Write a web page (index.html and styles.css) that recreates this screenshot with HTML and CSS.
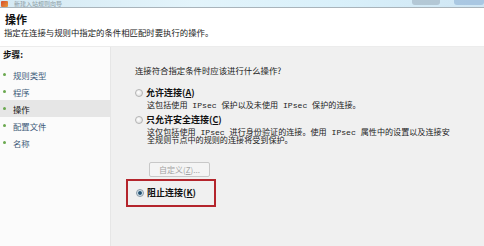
FILE: index.html
```html
<!DOCTYPE html>
<html lang="zh-CN">
<head>
<meta charset="utf-8">
<link rel="stylesheet" href="styles.css">
</head>
<body>
<div class="window">
  <div class="titlebar">
    <span class="app-icon"></span>
    <span class="title-text">新建入站规则向导</span>
    <span class="tb-spacer"></span>
    <span class="tb-btn"></span>
    <span class="tb-btn blue"></span>
  </div>
  <div class="header">
    <div class="h-title">操作</div>
    <div class="h-sub">指定在连接与规则中指定的条件相匹配时要执行的操作。</div>
  </div>
  <div class="body">
    <div class="steps">
      <div class="steps-title">步骤:</div>
      <div class="step"><span class="dot"></span>规则类型</div>
      <div class="step"><span class="dot"></span>程序</div>
      <div class="step current"><span class="dot"></span>操作</div>
      <div class="step"><span class="dot"></span>配置文件</div>
      <div class="step"><span class="dot"></span>名称</div>
    </div>
    <div class="content">
      <div class="question">连接符合指定条件时应该进行什么操作?</div>
      <div class="option opt1">
        <div class="opt-row"><span class="radio"></span><span class="opt-label">允许连接(<u>A</u>)</span></div>
        <div class="desc">这包括使用 IPsec 保护以及未使用 IPsec 保护的连接。</div>
      </div>
      <div class="option opt2">
        <div class="opt-row"><span class="radio"></span><span class="opt-label">只允许安全连接(<u>C</u>)</span></div>
        <div class="desc two">这仅包括使用 IPsec 进行身份验证的连接。使用 IPsec 属性中的设置以及连接安<br>全规则节点中的规则的连接将受到保护。</div>
      </div>
      <div class="btn-row"><span class="btn">自定义(<u>Z</u>)...</span></div>
      <div class="highlight">
        <div class="opt-row"><span class="radio checked"></span><span class="opt-label">阻止连接(<u>K</u>)</span></div>
      </div>
    </div>
  </div>
</div>
</body>
</html>
```

FILE: styles.css
```css
html, body {
  margin: 0;
  padding: 0;
}
body {
  width: 484px;
  height: 246px;
  overflow: hidden;
  font-family: "Noto Sans CJK SC", "Noto Sans", sans-serif;
  color: #222;
  background: #f0f0f0;
}
.window {
  display: flex;
  flex-direction: column;
  height: 246px;
}
.titlebar {
  height: 7px;
  display: flex;
  align-items: center;
  background: linear-gradient(90deg, #d5e9f3 0%, #e3f4fb 40%, #d9f0fa 70%, #cfe6f4 100%);
  border-bottom: 1px solid #a9b4bb;
  overflow: hidden;
}
.app-icon {
  width: 7px;
  height: 6px;
  margin-left: 1px;
  background: linear-gradient(135deg, #d64b2a, #e89a3c);
  border-radius: 1px;
}
.title-text {
  margin-left: 6px;
  font-size: 6px;
  line-height: 7px;
  color: #6d7a82;
  opacity: 0.7;
}
.tb-spacer { flex: 1; }
.tb-btn {
  width: 28px;
  height: 5px;
  margin-right: 14px;
  background: #9fb0bf;
  border-radius: 0 0 3px 3px;
  opacity: 0.6;
  align-self: flex-start;
}
.tb-btn.blue {
  width: 30px;
  margin-right: 0;
  background: #8fb3d6;
}
.header {
  height: 38px;
  background: #fff;
  padding-left: 4px;
  box-sizing: border-box;
  padding-top: 4px;
}
.h-title {
  font-size: 11px;
  font-weight: bold;
  line-height: 14px;
  color: #111;
  padding-left: 1px;
}
.h-sub {
  font-size: 8.4px;
  line-height: 10px;
  margin-top: 1px;
  color: #222;
}
.body {
  flex: 1;
  display: flex;
  border-top: 1px solid #ececec;
}
.steps {
  width: 111px;
  background: #fbfbfb;
  border-right: 1px solid #e6e6e6;
  padding-top: 2px;
  box-sizing: border-box;
}
.steps-title {
  font-size: 8.6px;
  font-weight: bold;
  line-height: 10px;
  padding-left: 3px;
  color: #111;
  margin-bottom: 7px;
}
.step {
  display: flex;
  align-items: center;
  height: 17px;
  font-size: 8.4px;
  color: #3e5c7a;
  padding-left: 3px;
}
.step.current {
  background: #e6e6e6;
  color: #111;
}
.dot {
  width: 3px;
  height: 3px;
  border-radius: 50%;
  background: #6aa84f;
  margin-right: 7px;
}
.content {
  flex: 1;
  background: #f0f0f0;
  padding-left: 24px;
  padding-top: 19px;
}
.question {
  font-size: 8.4px;
  line-height: 9px;
  color: #222;
}
.option.opt1 { margin-top: 13px; }
.option.opt2 { margin-top: 5px; }
.opt-row {
  display: flex;
  align-items: center;
  height: 10px;
}
.radio {
  width: 6px;
  height: 6px;
  border-radius: 50%;
  border: 1px solid #b4b4b4;
  background: radial-gradient(circle at 40% 40%, #fff 0%, #e4e4e4 70%, #cfcfcf 100%);
  margin-right: 3px;
  flex: none;
}
.radio.checked {
  background: radial-gradient(circle, #1f3f5e 0%, #2e5f7f 35%, #cfe0ea 55%, #e8e8e8 100%);
  border-color: #8a9aa8;
}
.opt-label {
  font-size: 9px;
  font-weight: bold;
  line-height: 10px;
  color: #111;
}
.desc {
  font-family: "Liberation Mono", "Noto Sans CJK SC", monospace;
  font-size: 8.1px;
  line-height: 8px;
  color: #222;
  margin-left: 12px;
  margin-top: 4px;
  white-space: nowrap;
}
.desc.two {
  line-height: 7.6px;
  margin-top: 4px;
}
.btn-row {
  margin-top: 18px;
  padding-left: 14px;
  height: 15px;
  display: flex;
}
.btn {
  display: inline-flex;
  align-items: center;
  justify-content: center;
  width: 59px;
  height: 13px;
  border: 1px solid #c8c8c8;
  border-radius: 2px;
  background: #f4f4f4;
  font-size: 8px;
  line-height: 10px;
  color: #a3a3a3;
}
.highlight {
  margin-top: 2px;
  margin-left: -9px;
  width: 78px;
  height: 24px;
  border: 2px solid #b4252c;
  display: flex;
  align-items: center;
  padding-left: 8px;
}
u { text-decoration: underline; text-underline-offset: 1px; }
```
